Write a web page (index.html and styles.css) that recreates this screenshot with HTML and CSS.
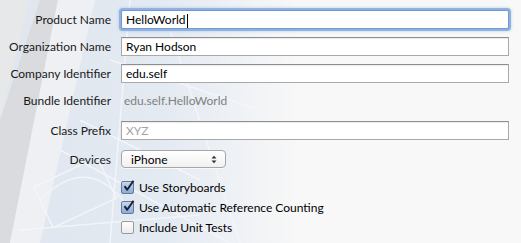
FILE: index.html
```html
<!DOCTYPE html>
<html lang="en">
<head>
    <meta charset="UTF-8">
    <title>New Project Options</title>
    <link rel="stylesheet" href="styles.css">
</head>
<body>
    <div class="sheet">
        <svg class="blueprint" width="300" height="243" viewBox="0 0 300 243">
            <defs>
                <linearGradient id="fade" x1="0" x2="1" y1="0" y2="0">
                    <stop offset="0" stop-color="#dfe6ef" stop-opacity="1"/>
                    <stop offset="0.55" stop-color="#e4eaf2" stop-opacity="1"/>
                    <stop offset="1" stop-color="#f8f8f8" stop-opacity="1"/>
                </linearGradient>
            </defs>
            <rect width="300" height="243" fill="url(#fade)"/>
            <!-- grey margin on the left -->
            <polygon points="0,0 30,0 0,120" fill="#e6e8ea"/>
            <polygon points="0,120 40,0 58,0 10,243 0,243" fill="#d9dbde"/>
            <!-- white diagonal band -->
            <polygon points="58,0 95,0 40,243 10,243" fill="#eef0f3"/>
            <!-- faint drawing lines -->
            <g stroke="#f4f7fb" stroke-width="1.5" fill="none" opacity="0.9">
                <line x1="60" y1="150" x2="230" y2="243"/>
                <line x1="80" y1="120" x2="200" y2="180"/>
                <path d="M40 200 Q 90 150 130 210"/>
                <line x1="110" y1="60" x2="260" y2="110"/>
                <line x1="130" y1="0" x2="110" y2="243"/>
                <line x1="20" y1="230" x2="200" y2="215"/>
                <rect x="40" y="170" width="70" height="45" transform="rotate(-25 75 192)"/>
                <line x1="170" y1="30" x2="240" y2="243"/>
            </g>
        </svg>

        <form class="options">
            <div class="row first">
                <label class="label">Product Name</label>
                <div class="field focused">HelloWorld<span class="caret"></span></div>
            </div>
            <div class="row">
                <label class="label">Organization Name</label>
                <div class="field">Ryan Hodson</div>
            </div>
            <div class="row">
                <label class="label">Company Identifier</label>
                <div class="field">edu.self</div>
            </div>
            <div class="row static">
                <label class="label">Bundle Identifier</label>
                <div class="value">edu.self.HelloWorld</div>
            </div>
            <div class="row prefix">
                <label class="label">Class Prefix</label>
                <div class="field placeholder">XYZ</div>
            </div>
            <div class="row devices">
                <label class="label">Devices</label>
                <div class="popup">
                    <span>iPhone</span>
                    <svg class="arrows" width="6" height="9" viewBox="0 0 6 9">
                        <path d="M0.5 3.5 L3 0.8 L5.5 3.5 Z M0.5 5.5 L3 8.2 L5.5 5.5 Z" fill="#333"/>
                    </svg>
                </div>
            </div>
            <div class="checks">
                <div class="check">
                    <span class="box on">
                        <svg width="13" height="13" viewBox="0 0 13 13"><path d="M2.5 6.2 L5.2 9.8 L11.5 0.8" stroke="#1c2433" stroke-width="2" fill="none" stroke-linejoin="round"/></svg>
                    </span>
                    Use Storyboards
                </div>
                <div class="check">
                    <span class="box on">
                        <svg width="13" height="13" viewBox="0 0 13 13"><path d="M2.5 6.2 L5.2 9.8 L11.5 0.8" stroke="#1c2433" stroke-width="2" fill="none" stroke-linejoin="round"/></svg>
                    </span>
                    Use Automatic Reference Counting
                </div>
                <div class="check">
                    <span class="box"></span>
                    Include Unit Tests
                </div>
            </div>
        </form>
    </div>
</body>
</html>
```

FILE: styles.css
```css
body {
    margin: 0;
    background: #f8f8f8;
    font-family: Lato, "DejaVu Sans", sans-serif;
    font-size: 12px;
    color: #000;
}
.sheet {
    position: relative;
    width: 521px;
    height: 243px;
    overflow: hidden;
}
.blueprint {
    position: absolute;
    left: 0;
    top: 0;
}
.options {
    position: relative;
    padding: 10px 12px 0 0;
}
.row {
    display: flex;
    align-items: center;
    height: 19px;
    margin-top: 8px;
}
.row.first {
    margin-top: 0;
}
.row.prefix {
    margin-top: 11px;
}
.row.devices {
    margin-top: 10px;
    height: 18px;
}
.label {
    width: 111px;
    text-align: right;
    color: #1a1a1a;
    flex-shrink: 0;
}
.field {
    margin-left: 10px;
    flex: 1;
    height: 17px;
    line-height: 17px;
    padding: 0 4px;
    background: #fff;
    border: 1px solid #a9a9a9;
    border-top-color: #8f8f8f;
    box-shadow: inset 0 1px 1px rgba(0, 0, 0, 0.08);
}
.field.focused {
    border: 1px solid #6e9ad0;
    border-radius: 2px;
    box-shadow: 0 0 0 2px #8fb3de, 0 0 3px 2px rgba(120, 160, 215, 0.5);
}
.caret {
    display: inline-block;
    width: 1px;
    height: 14px;
    background: #000;
    vertical-align: middle;
    margin-left: 1px;
}
.field.placeholder {
    color: #a3a3a3;
}
.value {
    margin-left: 13px;
    color: #808080;
}
.popup {
    margin-left: 10px;
    height: 16px;
    display: flex;
    align-items: center;
    justify-content: space-between;
    padding: 0 8px 0 9px;
    width: 86px;
    border: 1px solid #a6a6a6;
    border-radius: 4px;
    background: linear-gradient(#ffffff, #f1f1f1);
    box-shadow: 0 1px 0 rgba(255, 255, 255, 0.6);
}
.checks {
    margin: 13px 0 0 121px;
    display: flex;
    flex-direction: column;
    gap: 7px;
}
.check {
    display: flex;
    align-items: center;
    height: 13px;
}
.box {
    position: relative;
    width: 11px;
    height: 11px;
    margin-right: 5px;
    border: 1px solid #9a9a9a;
    border-radius: 2px;
    background: linear-gradient(#fdfdfd, #ececec);
}
.box.on {
    border-color: #5f7a9c;
    background: linear-gradient(#c6d7ee, #8eacd8);
}
.box svg {
    position: absolute;
    left: 0;
    top: -2px;
}
```
